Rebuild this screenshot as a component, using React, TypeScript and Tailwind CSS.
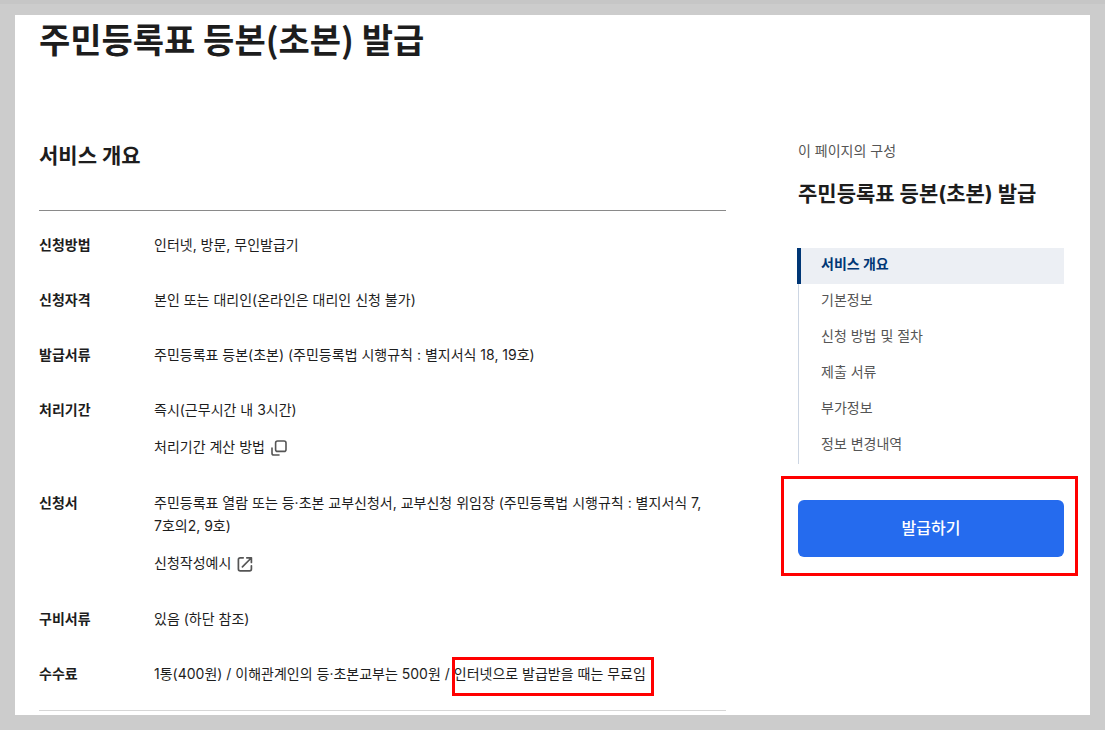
import type { ReactNode } from "react";

const BODY = "text-sm leading-[23px]";

function PopupIcon() {
  return (
    <svg className="mt-0.5" width="16" height="16" viewBox="0 0 16 16" fill="none" stroke="#555555" strokeWidth="1.6" strokeLinecap="round" aria-hidden="true">
      <rect x="4.6" y="1" width="10.4" height="10.4" rx="2" />
      <path d="M1 8v5.2c0 1 .8 1.8 1.8 1.8H8" />
    </svg>
  );
}

function ExternalIcon() {
  return (
    <svg className="mt-0.5" width="16" height="16" viewBox="0 0 16 16" fill="none" stroke="#555555" strokeWidth="1.7" strokeLinecap="round" aria-hidden="true">
      <path d="M6.2 1.8H3.2c-1 0-1.8.8-1.8 1.8v9.4c0 1 .8 1.8 1.8 1.8h9.4c1 0 1.8-.8 1.8-1.8V9.8" />
      <path d="M5.4 10.8L14.2 2M9.8 1.8h4.6v4.6" strokeLinejoin="round" />
    </svg>
  );
}

function Row({ label, children }: { label: string; children: ReactNode }) {
  return (
    <div className="flex">
      <dt className="w-[115px] shrink-0 font-bold">{label}</dt>
      <dd className="min-w-0 flex-1">{children}</dd>
    </div>
  );
}

function DetailLink({ label, icon }: { label: string; icon: ReactNode }) {
  return (
    <a href="#detail" className="mt-3.5 flex w-fit items-center gap-1.5 leading-6">
      {label}
      {icon}
    </a>
  );
}

const sections = ["기본정보", "신청 방법 및 절차", "제출 서류", "부가정보", "정보 변경내역"];

export default function App() {
  return (
    <div className="min-h-screen border-t-4 border-[#c6c6c6] bg-[#cccccc] px-[15px] pt-[11px] pb-[15px] font-['Inter','Noto_Sans_CJK_KR',sans-serif] break-keep text-[#1d1d1d]">
      <div className="bg-white pr-[26px] pb-1 pl-6">
        <h1 className="h-[119px] pt-px font-['Noto_Sans_CJK_KR',sans-serif] text-[34px] leading-[46px] font-bold">주민등록표 등본(초본) 발급</h1>
        <div className="flex items-start gap-[72px]">
          <main className="min-w-0 flex-1">
            <h2 className="border-b border-[#8a8a8a] pt-[7px] pb-[39px] text-[21px] leading-[30px] font-bold">서비스 개요</h2>
            <dl className={`flex flex-col gap-8 border-b border-[#d6d6d6] pt-[22px] pb-[25px] ${BODY}`}>
              <Row label="신청방법">인터넷, 방문, 무인발급기</Row>
              <Row label="신청자격">본인 또는 대리인(온라인은 대리인 신청 불가)</Row>
              <Row label="발급서류">주민등록표 등본(초본) (주민등록법 시행규칙 : 별지서식 18, 19호)</Row>
              <Row label="처리기간">
                즉시(근무시간 내 3시간)
                <DetailLink label="처리기간 계산 방법" icon={<PopupIcon />} />
              </Row>
              <Row label="신청서">
                주민등록표 열람 또는 등·초본 교부신청서, 교부신청 위임장 (주민등록법 시행규칙 : 별지서식 7, 7호의2, 9호)
                <DetailLink label="신청작성예시" icon={<ExternalIcon />} />
              </Row>
              <Row label="구비서류">있음 (하단 참조)</Row>
              <Row label="수수료">
                1통(400원) / 이해관계인의 등·초본교부는 500원 /{" "}
                <span className="relative inline-block">
                  인터넷으로 발급받을 때는 무료임
                  <span className="pointer-events-none absolute -top-[5px] -right-2 -bottom-[11px] -left-0.5 border-3 border-[#ff0000]" />
                </span>
              </Row>
            </dl>
          </main>
          <aside className="w-[266px] shrink-0 pt-[5px]">
            <p className={`text-[#555555] ${BODY}`}>이 페이지의 구성</p>
            <h2 className="mt-[17px] text-[21px] leading-[30px] font-bold">주민등록표 등본(초본) 발급</h2>
            <nav className="-ml-px pt-[39px] text-sm text-[#555555]">
              <a href="#overview" className="block border-l-4 border-[#003675] bg-[#eceff4] pb-1 pl-5 leading-8 font-bold text-[#003675]">
                서비스 개요
              </a>
              <ul className="ml-px border-l border-[#cdd6e3]">
                {sections.map((name) => (
                  <li key={name}>
                    <a href="#section" className="block pb-1 pl-[22px] leading-8">
                      {name}
                    </a>
                  </li>
                ))}
              </ul>
            </nav>
            <div className="relative mt-9">
              <button type="button" className="h-[57px] w-full rounded-md bg-[#256bee] pb-0.5 text-base font-medium text-white">
                발급하기
              </button>
              <span className="pointer-events-none absolute -top-6 -right-3.5 -bottom-[19px] -left-[17px] border-3 border-[#ff0000]" />
            </div>
          </aside>
        </div>
      </div>
    </div>
  );
}
